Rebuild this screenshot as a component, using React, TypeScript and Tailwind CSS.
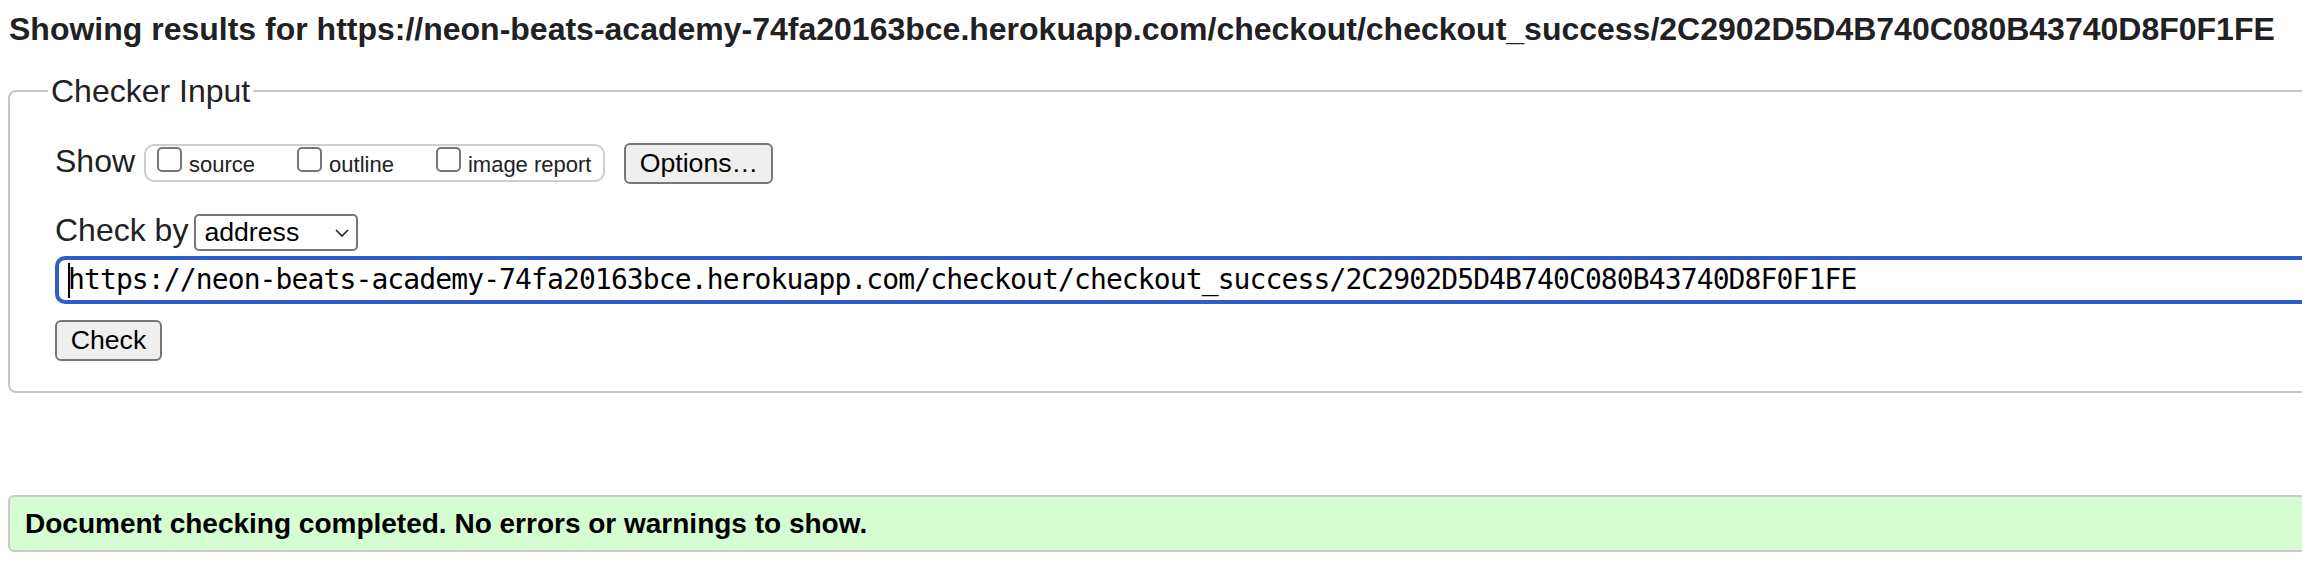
import React from 'react'

const pageUrl =
  'https://neon-beats-academy-74fa20163bce.herokuapp.com/checkout/checkout_success/2C2902D5D4B740C080B43740D8F0F1FE'

function Checkbox({ label }: { label: string }) {
  return (
    <label className="flex items-baseline gap-[7px]">
      <span className="w-[25px] h-[25px] shrink-0 rounded-[5px] border-2 border-[#767676] bg-white" />
      <span className="text-[22px] leading-[25px]">{label}</span>
    </label>
  )
}

function GrayButton({ children, width }: { children: React.ReactNode; width: string }) {
  return (
    <button
      className={`${width} h-[41px] flex items-center justify-center rounded-[6px] border-2 border-[#767676] bg-[#efefef] text-[26.67px] leading-[31px] text-black`}
    >
      {children}
    </button>
  )
}

export default function App() {
  return (
    <div className="w-full h-[574px] overflow-hidden bg-white text-[#222] font-['Liberation_Sans',Arial,sans-serif]">
      <h2 className="pl-[9px] pt-[11px] text-[32px] leading-[36px] font-bold whitespace-nowrap text-[#212124]">
        Showing results for {pageUrl}
      </h2>

      <fieldset className="mt-[26px] ml-[8px] w-[2500px] rounded-[8px] border-2 border-[#c8c8c8] pl-[38px] pt-[34px] pb-[30px]">
        <legend className="px-[3px] text-[32px] leading-[36px]">Checker Input</legend>

        <div className="pl-[7px] flex flex-col">
          {/* show options */}
          <div className="flex items-baseline">
            <span className="text-[32px] leading-[36px]">Show</span>
            <div className="ml-[9px] h-[38px] flex items-baseline gap-[42px] rounded-[10px] border-2 border-[#cecece] pl-[11px] pr-[12px] pt-[1px]">
              <Checkbox label="source" />
              <Checkbox label="outline" />
              <Checkbox label="image report" />
            </div>
            <div className="ml-[19px]">
              <GrayButton width="w-[149px]">Options…</GrayButton>
            </div>
          </div>

          {/* check by */}
          <div className="mt-[28px] flex items-baseline">
            <span className="text-[32px] leading-[36px]">Check by</span>
            <div className="ml-[6px] w-[164px] h-[37px] flex items-center justify-between rounded-[5px] border-2 border-[#767676] bg-white pl-[8px] pr-[7px]">
              <span className="text-[26.67px] leading-[31px] text-black">address</span>
              <svg width="14" height="8" viewBox="0 0 14 8" fill="none">
                <path d="M1 1l6 6 6-6" stroke="#222" strokeWidth="1.6" />
              </svg>
            </div>
          </div>

          {/* address field, focused */}
          <div className="mt-[5px] h-[48px] flex items-center rounded-[10px] border-4 border-[#2c5fcb] pl-[9px]">
            <span className="w-[2px] h-[35px] bg-black shrink-0 -mr-[2px]" />
            <span className="font-['DejaVu_Sans_Mono',monospace] text-[28px] tracking-[-0.89px] text-black whitespace-nowrap">
              {pageUrl}
            </span>
          </div>

          <div className="mt-[16px]">
            <GrayButton width="w-[107px]">Check</GrayButton>
          </div>
        </div>
      </fieldset>

      <div className="mt-[102px] ml-[8px] w-[2500px] h-[57px] flex items-center rounded-[6px] border-2 border-[#c9c9c9] bg-[#d6fcd2] pl-[15px]">
        <p className="text-[28px] leading-[32px] font-bold text-black">
          Document checking completed. No errors or warnings to show.
        </p>
      </div>
    </div>
  )
}
